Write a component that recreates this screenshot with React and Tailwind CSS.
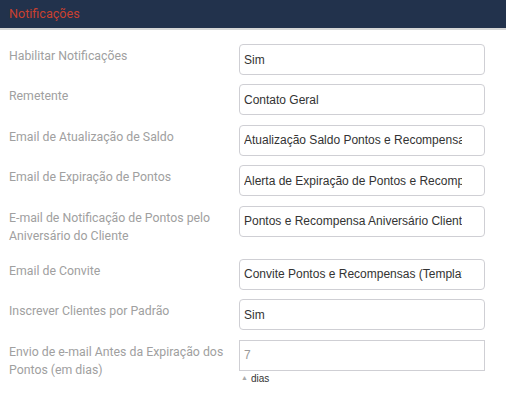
import React from "react";

const rows = [
  { label: "Habilitar Notificações", value: "Sim" },
  { label: "Remetente", value: "Contato Geral" },
  { label: "Email de Atualização de Saldo", value: "Atualização Saldo Pontos e Recompensas (Template)" },
  { label: "Email de Expiração de Pontos", value: "Alerta de Expiração de Pontos e Recompensas (Template)" },
  { label: "E-mail de Notificação de Pontos pelo Aniversário do Cliente", value: "Pontos e Recompensa Aniversário Cliente (Template)" },
  { label: "Email de Convite", value: "Convite Pontos e Recompensas (Template)" },
  { label: "Inscrever Clientes por Padrão", value: "Sim" },
];

export default function App() {
  return (
    <div className="w-[506px] h-[398px] bg-white overflow-hidden" style={{ fontFamily: "Roboto, sans-serif" }}>
      <div className="h-[28px] bg-[#22324c] border-b-2 border-[#d6d6d6] box-content flex items-center pl-[9px]">
        <span className="text-[12.6px] text-[#c9402f] leading-none">Notificações</span>
      </div>
      <div className="pt-[14px] pl-[9px] flex flex-col gap-[9.4px]">
        {rows.map((r) => (
          <div key={r.label} className="flex items-start">
            <div className="w-[230px] pr-[10px] pt-[3px] pb-[5px] text-[12.3px] leading-[18px] text-[#a0a0a0]">
              {r.label}
            </div>
            <input
              readOnly
              value={r.value}
              className="w-[246px] h-[31px] border border-[#cfcfd4] rounded-[4px] pl-[4px] pr-[22px] text-[12px] text-[#333] outline-none"
              style={{ fontFamily: '"Liberation Sans", Arial, sans-serif' }}
            />
          </div>
        ))}
        <div className="flex items-start">
          <div className="w-[230px] pr-[4px] pt-[3px] text-[12.3px] leading-[18px] text-[#a0a0a0]">
            Envio de e-mail Antes da Expiração dos Pontos (em dias)
          </div>
          <div className="flex flex-col">
            <input
              readOnly
              value="7"
              className="w-[246px] h-[31px] border border-[#cfcfd4] pl-[4px] text-[12px] text-[#9a9a9a] outline-none"
              style={{ fontFamily: '"Liberation Sans", Arial, sans-serif' }}
            />
            <div
              className="flex items-center gap-[3px] pl-[2px] mt-[0px] text-[10px] text-[#333]"
              style={{ fontFamily: '"Liberation Sans", Arial, sans-serif' }}
            >
              <span className="text-[7px] text-[#aaa]">▲</span>
              <span>dias</span>
            </div>
          </div>
        </div>
      </div>
    </div>
  );
}
